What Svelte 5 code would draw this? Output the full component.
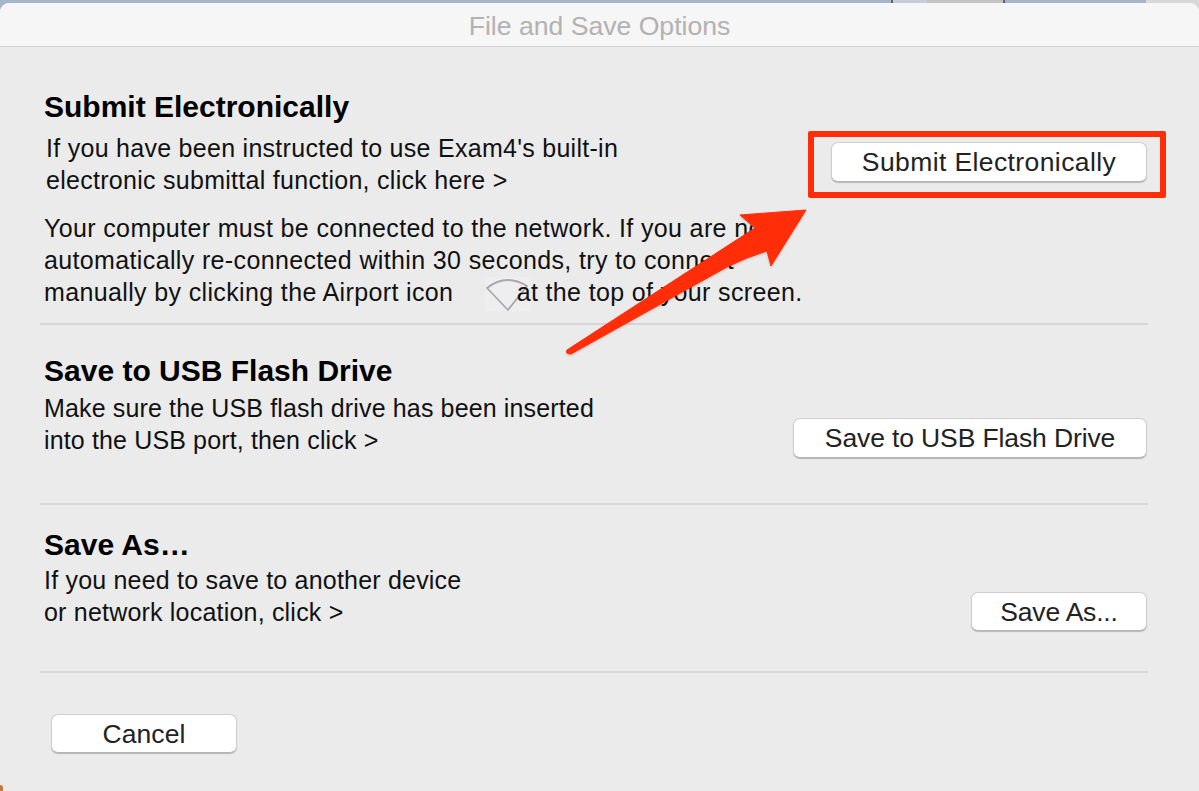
<script lang="ts">
	const sections = [
		{
			title: 'Save to USB Flash Drive',
			lines: ['Make sure the USB flash drive has been inserted', 'into the USB port, then click >'],
			button: 'Save to USB Flash Drive',
			cls: 'usb'
		},
		{
			title: 'Save As…',
			lines: ['If you need to save to another device', 'or network location, click >'],
			button: 'Save As...',
			cls: 'as'
		}
	];
</script>

<main>
	<div class="window">
		<header>File and Save Options</header>

		<div class="content">
			<section class="submit">
				<h2>Submit Electronically</h2>
				<div class="row">
					<p class="lead">
						If you have been instructed to use Exam4's built-in<br />
						electronic submittal function, click here &gt;
					</p>
					<button class="primary">Submit Electronically</button>
				</div>
				<p class="note">
					Your computer must be connected to the network. If you are not<br />
					automatically re-connected within 30 seconds, try to connect<br />
					manually by clicking the Airport icon
					<span class="wifi">
						<svg width="46" height="34" viewBox="0 0 46 34">
							<path d="M2 11 Q21 -4 42 9 L23 33 Z" fill="none" stroke="#aaa6ae" stroke-width="1.8" stroke-linejoin="round" />
						</svg>
					</span>at the top of your screen.
				</p>
			</section>

			{#each sections as s}
				<section class={s.cls}>
					<h2>{s.title}</h2>
					<div class="row">
						<p>
							{s.lines[0]}<br />
							{s.lines[1]}
						</p>
						<button>{s.button}</button>
					</div>
				</section>
			{/each}

			<footer>
				<button class="cancel">Cancel</button>
			</footer>
		</div>
	</div>

	<div class="corner"></div>
	<div class="callout"></div>
	<svg class="arrow" width="1199" height="791" viewBox="0 0 1199 791">
		<path
			d="M806 210 L740 215 L755 228 L567 350 Q565 354 571 354 L727 267 Q747 257 767 251 L771 266 Z"
			fill="#ff2d08"
			stroke="#ff2d08"
			stroke-width="1"
			stroke-linejoin="round"
		/>
	</svg>
</main>

<style>
	main {
		position: relative;
		width: 1199px;
		height: 791px;
		overflow: hidden;
		padding-top: 3px;
		box-sizing: border-box;
		background: linear-gradient(
			to right,
			#a6b6ca 0 891px,
			#5c6670 891px 893px,
			#c3ced9 893px 927px,
			#c6c4c0 927px 1003px,
			#5c6670 1003px 1005px,
			#a6b6ca 1005px 1146px,
			#d8d8d6 1146px
		);
		font-family: 'Liberation Sans', Arial, sans-serif;
		color: #111;
	}

	.window {
		height: 788px;
		background: #ebebeb;
		border-radius: 9px 9px 0 0;
		overflow: hidden;
	}

	header {
		height: 44px;
		box-sizing: border-box;
		border-bottom: 1px solid #d2d2d2;
		background: #f6f6f6;
		color: #b2b2b2;
		font-size: 26.6px;
		line-height: 46px;
		text-align: center;
	}

	.content {
		padding-left: 40px;
		width: 1108px;
	}

	section {
		border-bottom: 2px solid #d6d6d6;
		box-sizing: border-box;
		padding-left: 4px;
	}

	.submit {
		height: 278px;
		padding-top: 42px;
	}

	.usb {
		height: 180px;
		padding-top: 28px;
	}

	.as {
		height: 168px;
		padding-top: 22px;
	}

	h2 {
		margin: 0;
		font-size: 30px;
		line-height: 36px;
		font-weight: 700;
		color: #000;
	}

	p {
		margin: 0;
		font-size: 25px;
		letter-spacing: 0.28px;
		line-height: 32px;
	}

	.row {
		display: flex;
		justify-content: space-between;
		align-items: flex-start;
		padding-right: 1px;
	}

	.submit .row {
		padding-top: 7px;
	}

	.usb .row {
		padding-top: 3px;
	}

	.as .row {
		padding-top: 1px;
	}

	.usb p {
		letter-spacing: 0.14px;
	}

	.as p {
		letter-spacing: 0.2px;
	}

	.lead {
		margin-left: 2px;
	}

	.note {
		position: relative;
		z-index: 0;
		margin-top: 16px;
		white-space: nowrap;
		letter-spacing: 0.36px;
	}

	.wifi {
		display: inline-block;
		position: relative;
		width: 56px;
		height: 32px;
		vertical-align: top;
	}

	.wifi svg {
		position: absolute;
		left: 24px;
		top: 1px;
		z-index: -1;
		background: #eeeeee;
	}

	button {
		height: 40px;
		box-sizing: border-box;
		padding: 1px 0 0;
		background: #fff;
		border: 1px solid #cfcfcf;
		border-bottom-color: #b4b4b4;
		border-radius: 7px;
		box-shadow: 0 1px 1px rgba(0, 0, 0, 0.22);
		font-family: inherit;
		font-size: 26.5px;
		letter-spacing: 0.4px;
		color: #222;
	}

	.primary {
		width: 316px;
		margin-top: 10px;
	}

	.usb button {
		width: 354px;
		margin-top: 26px;
		letter-spacing: -0.12px;
	}

	.as button {
		width: 176px;
		height: 39px;
		margin-top: 28px;
		letter-spacing: -0.2px;
	}

	footer {
		padding: 41px 0 0 11px;
	}

	.cancel {
		width: 186px;
		height: 39px;
		padding-top: 2px;
		letter-spacing: 0.07px;
	}

	.corner {
		position: absolute;
		left: 0;
		bottom: 0;
		width: 3px;
		height: 6px;
		background: #c9773a;
		border-top-right-radius: 3px;
	}

	.callout {
		position: absolute;
		left: 808px;
		top: 131px;
		width: 358px;
		height: 67px;
		box-sizing: border-box;
		border: 6px solid #ff2d08;
		border-radius: 2px;
	}

	.arrow {
		position: absolute;
		inset: 0;
		pointer-events: none;
		filter: drop-shadow(0 1px 1px rgba(0, 0, 0, 0.2));
	}
</style>
